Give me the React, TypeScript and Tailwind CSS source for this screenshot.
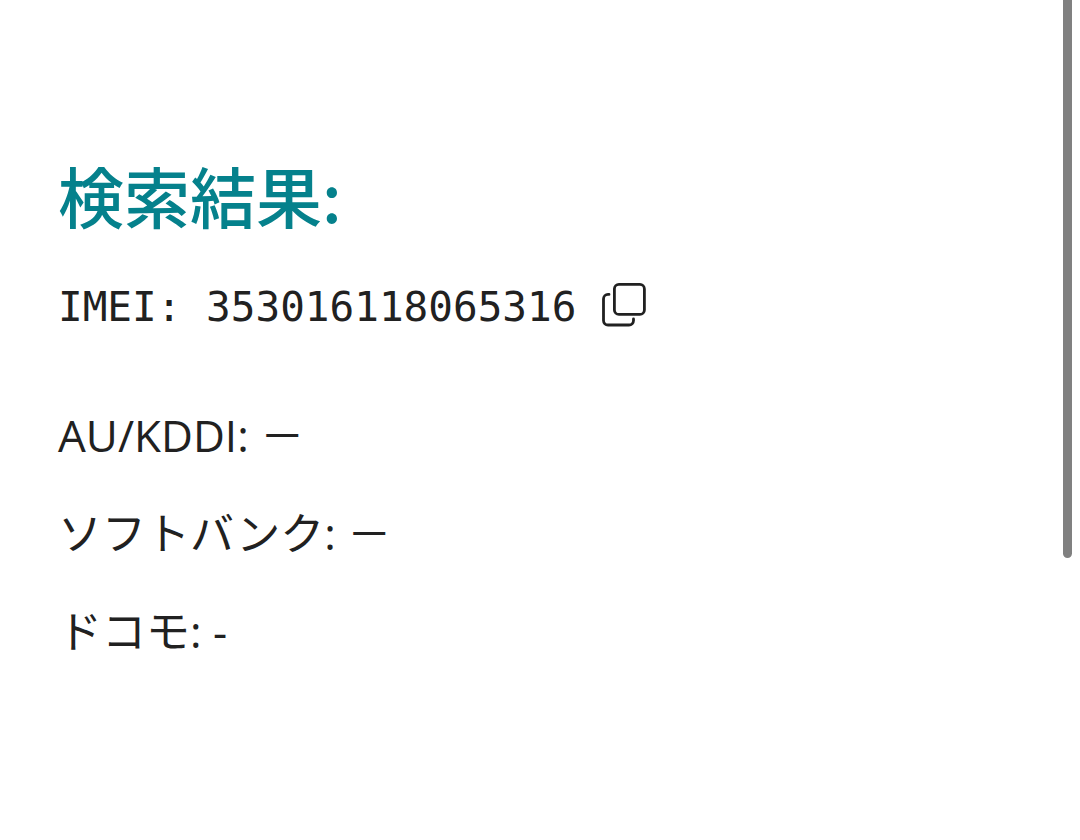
import { useState } from "react";

const IMEI = "353016118065316";

const carriers = [
  { name: "AU/KDDI", status: "－" },
  { name: "ソフトバンク", status: "－" },
  { name: "ドコモ", status: "-" },
];

function CopyIcon() {
  return (
    <svg
      className="h-12 w-12"
      viewBox="0 0 48 48"
      fill="none"
      stroke="currentColor"
      strokeWidth="2.8"
      strokeLinecap="round"
      strokeLinejoin="round"
    >
      <rect x="14.4" y="1.4" width="30" height="30" rx="4.5" />
      <path d="M9 11.400H8A4.500 4.500 0 0 0 3.500 15.900v21.600A4.500 4.500 0 0 0 8 42h21a4.500 4.500 0 0 0 4.500-4.500v-1.500" />
    </svg>
  );
}

export default function App() {
  const [copied, setCopied] = useState(false);

  async function handleCopy() {
    await navigator.clipboard.writeText(IMEI);
    setCopied(true);
  }

  return (
    <div className="flex min-h-screen justify-between bg-white font-['Open_Sans','Noto_Sans_CJK_JP',sans-serif] text-[#212121]">
      <main className="min-w-0 flex-1 px-[58px] pt-[154px]">
        <h1 className="font-['Noto_Sans_CJK_JP',sans-serif] text-[66px] leading-[80px] font-medium text-[#05818c]">
          検索結果:
        </h1>

        <div className="mt-[38px] flex items-center gap-6">
          <p className="font-['DejaVu_Sans_Mono',monospace] text-[41px] leading-[70px]">
            IMEI: {IMEI}
          </p>
          <button
            type="button"
            onClick={handleCopy}
            aria-label="コピー"
            aria-pressed={copied}
          >
            <CopyIcon />
          </button>
        </div>

        <ul className="mt-[60px] space-y-8 text-[44px] leading-[66px]">
          {carriers.map((carrier) => (
            <li key={carrier.name}>
              {carrier.name}: {carrier.status}
            </li>
          ))}
        </ul>
      </main>

      <div className="mr-2 h-[558px] w-[9px] shrink-0 rounded-b-full bg-[#808080]" />
    </div>
  );
}
